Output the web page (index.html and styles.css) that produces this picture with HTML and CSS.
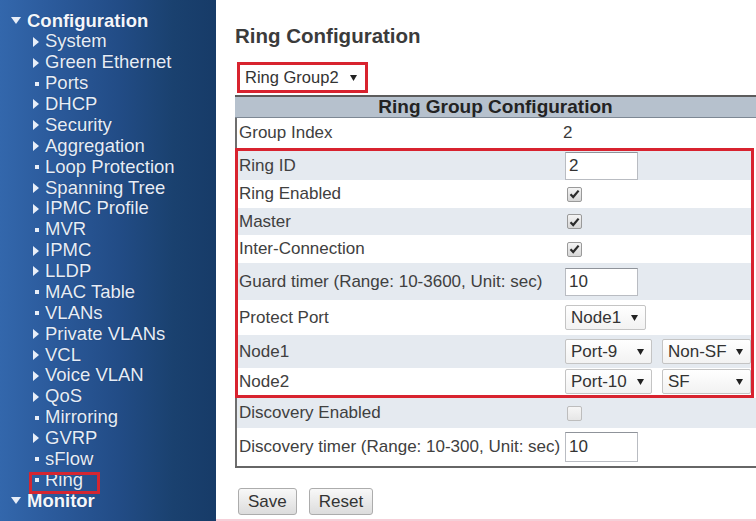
FILE: index.html
```html
<!DOCTYPE html>
<html lang="en">
<head>
<meta charset="utf-8">
<title>Ring Configuration</title>
<link rel="stylesheet" href="styles.css">
</head>
<body>
<div class="page">
  <nav class="sidebar">
    <div class="grp"><span class="caret"></span>Configuration</div>
    <ul class="menu">
      <li class="item"><span class="ico tri"></span>System</li>
      <li class="item"><span class="ico tri"></span>Green Ethernet</li>
      <li class="item"><span class="ico dot"></span>Ports</li>
      <li class="item"><span class="ico tri"></span>DHCP</li>
      <li class="item"><span class="ico tri"></span>Security</li>
      <li class="item"><span class="ico tri"></span>Aggregation</li>
      <li class="item"><span class="ico dot"></span>Loop Protection</li>
      <li class="item"><span class="ico tri"></span>Spanning Tree</li>
      <li class="item"><span class="ico tri"></span>IPMC Profile</li>
      <li class="item"><span class="ico dot"></span>MVR</li>
      <li class="item"><span class="ico tri"></span>IPMC</li>
      <li class="item"><span class="ico tri"></span>LLDP</li>
      <li class="item"><span class="ico dot"></span>MAC Table</li>
      <li class="item"><span class="ico dot"></span>VLANs</li>
      <li class="item"><span class="ico tri"></span>Private VLANs</li>
      <li class="item"><span class="ico tri"></span>VCL</li>
      <li class="item"><span class="ico tri"></span>Voice VLAN</li>
      <li class="item"><span class="ico tri"></span>QoS</li>
      <li class="item"><span class="ico dot"></span>Mirroring</li>
      <li class="item"><span class="ico tri"></span>GVRP</li>
      <li class="item"><span class="ico dot"></span>sFlow</li>
      <li class="item current"><span class="ico dot"></span>Ring</li>
    </ul>
    <div class="grp"><span class="caret"></span>Monitor</div>
  </nav>

  <main class="main">
    <h1 class="title">Ring Configuration</h1>
    <div class="group-select">
      <span>Ring Group2</span>
      <svg class="arr" width="7" height="6" viewBox="0 0 7 6"><path d="M0 0H7L3.5 6Z" fill="#222"/></svg>
    </div>

    <div class="cfg">
      <div class="cfg-head">Ring Group Configuration</div>
      <div class="row h30">
        <div class="lbl">Group Index</div>
        <div class="val val-text">2</div>
      </div>
      <div class="ring-box">
        <div class="row even h29">
          <div class="lbl">Ring ID</div>
          <div class="val"><input class="inp" type="text" value="2"></div>
        </div>
        <div class="row h28">
          <div class="lbl">Ring Enabled</div>
          <div class="val"><span class="chk"><svg width="11" height="10" viewBox="0 0 11 10"><path d="M1.5 5.2L4.2 8L9.6 1.6" fill="none" stroke="#2b2b2b" stroke-width="2.2"/></svg></span></div>
        </div>
        <div class="row even h27">
          <div class="lbl">Master</div>
          <div class="val"><span class="chk"><svg width="11" height="10" viewBox="0 0 11 10"><path d="M1.5 5.2L4.2 8L9.6 1.6" fill="none" stroke="#2b2b2b" stroke-width="2.2"/></svg></span></div>
        </div>
        <div class="row h28">
          <div class="lbl">Inter-Connection</div>
          <div class="val"><span class="chk"><svg width="11" height="10" viewBox="0 0 11 10"><path d="M1.5 5.2L4.2 8L9.6 1.6" fill="none" stroke="#2b2b2b" stroke-width="2.2"/></svg></span></div>
        </div>
        <div class="row even h37">
          <div class="lbl">Guard timer (Range: 10-3600, Unit: sec)</div>
          <div class="val"><input class="inp" type="text" value="10"></div>
        </div>
        <div class="row h35">
          <div class="lbl">Protect Port</div>
          <div class="val">
            <div class="sel w81"><span>Node1</span><svg class="arr" width="7" height="6" viewBox="0 0 7 6"><path d="M0 0H7L3.5 6Z" fill="#222"/></svg></div>
          </div>
        </div>
        <div class="row even h33">
          <div class="lbl">Node1</div>
          <div class="val">
            <div class="sel w87"><span>Port-9</span><svg class="arr" width="7" height="6" viewBox="0 0 7 6"><path d="M0 0H7L3.5 6Z" fill="#222"/></svg></div>
            <div class="sel w89"><span>Non-SF</span><svg class="arr" width="7" height="6" viewBox="0 0 7 6"><path d="M0 0H7L3.5 6Z" fill="#222"/></svg></div>
          </div>
        </div>
        <div class="row h27">
          <div class="lbl">Node2</div>
          <div class="val">
            <div class="sel w87"><span>Port-10</span><svg class="arr" width="7" height="6" viewBox="0 0 7 6"><path d="M0 0H7L3.5 6Z" fill="#222"/></svg></div>
            <div class="sel w89"><span>SF</span><svg class="arr" width="7" height="6" viewBox="0 0 7 6"><path d="M0 0H7L3.5 6Z" fill="#222"/></svg></div>
          </div>
        </div>
      </div>
      <div class="row even h30">
        <div class="lbl">Discovery Enabled</div>
        <div class="val"><span class="chk off"></span></div>
      </div>
      <div class="row h38">
        <div class="lbl">Discovery timer (Range: 10-300, Unit: sec)</div>
        <div class="val"><input class="inp tall" type="text" value="10"></div>
      </div>
    </div>

    <div class="actions">
      <button class="btn" type="button">Save</button>
      <button class="btn" type="button">Reset</button>
    </div>
  </main>
</div>
</body>
</html>
```

FILE: styles.css
```css
html, body {
  margin: 0;
  padding: 0;
  background: #fff;
}

body {
  font-family: "Liberation Sans", Arial, sans-serif;
}

.page {
  display: grid;
  grid-template-columns: 216px 1fr;
  height: 521px;
  overflow: hidden;
}

/* ---------- sidebar ---------- */
.sidebar {
  background: linear-gradient(to right, #3367ac 0%, #2b5a9b 25%, #224c86 55%, #1a416f 80%, #173b68 100%);
  color: #e6edf7;
  font-size: 18.5px;
  line-height: 20.87px;
  padding-top: 10.5px;
  overflow: hidden;
  text-shadow: 0 0 1px rgba(10, 30, 70, 0.6);
}

.grp {
  display: flex;
  align-items: center;
  padding-left: 10px;
  font-weight: bold;
  color: #f3f6fb;
}

.caret {
  width: 17px;
  height: 8px;
  flex: none;
  position: relative;
}

.caret::before {
  content: "";
  position: absolute;
  left: 1px;
  top: 0;
  border-left: 5.5px solid transparent;
  border-right: 5.5px solid transparent;
  border-top: 7px solid #e8eef8;
}

.menu {
  list-style: none;
  margin: 0;
  padding: 0;
}

.item {
  display: flex;
  align-items: center;
  padding-left: 32px;
  white-space: nowrap;
}

.item.current {
  position: relative;
}

.item.current::after {
  content: "";
  position: absolute;
  left: 29px;
  top: 2px;
  width: 71px;
  height: 22px;
  box-sizing: border-box;
  border: 3px solid #d42631;
}

.ico {
  width: 13px;
  height: 10px;
  flex: none;
  position: relative;
}

.tri::before {
  content: "";
  position: absolute;
  left: 1px;
  top: 0;
  border-top: 5px solid transparent;
  border-bottom: 5px solid transparent;
  border-left: 6px solid #e8eef8;
}

.dot::before {
  content: "";
  position: absolute;
  left: 3px;
  top: 3px;
  width: 4px;
  height: 4px;
  background: #e8eef8;
}

/* ---------- main ---------- */
.main {
  padding: 24px 0 0 19px;
  border-bottom: 2px solid #f6cfd8;
  box-sizing: border-box;
  color: #3a3a3a;
  overflow: hidden;
}

.title {
  margin: 0;
  font-size: 20.5px;
  line-height: 24px;
  font-weight: bold;
  color: #3b3b3b;
}

.group-select {
  margin: 14px 0 2px 2px;
  width: 131px;
  height: 31px;
  box-sizing: border-box;
  border: 3px solid #d8232f;
  display: flex;
  align-items: center;
  gap: 11px;
  padding-left: 5px;
  font-size: 16.5px;
  color: #333;
  background: #fff;
}

.cfg {
  border-top: 2px solid #5c5c5c;
  border-bottom: 2px solid #666;
  font-size: 17px;
}

.cfg-head {
  height: 20px;
  border-bottom: 1px solid #7d8894;
  background: #b6c1cd;
  text-align: center;
  font-weight: bold;
  font-size: 19px;
  line-height: 20px;
  color: #232323;
}

.row {
  display: grid;
  grid-template-columns: 326px 1fr;
  align-items: center;
  border-left: 2px solid #6e6e6e;
  background: #fff;
}

.row.even {
  background: #e5eaf0;
}

.h27 { height: 27px; }
.h28 { height: 28px; }
.h29 { height: 29px; }
.h30 { height: 30px; }
.h33 { height: 33px; }
.h35 { height: 35px; }
.h37 { height: 37px; }
.h38 { height: 38px; }

.lbl {
  padding-left: 2px;
  white-space: nowrap;
  color: #404040;
}

.val {
  display: flex;
  align-items: center;
  gap: 10px;
  padding-left: 2px;
}

.val-text {
  padding-left: 0;
}

.ring-box {
  border: 3px solid #d8232f;
  margin-right: 2px;
}

.ring-box .row {
  border-left: 0;
  grid-template-columns: 325px 1fr;
}

.ring-box .lbl {
  padding-left: 1px;
}

.inp {
  width: 73px;
  height: 28px;
  box-sizing: border-box;
  margin: 0;
  border: 1px solid #b9bcc2;
  border-top-color: #8f939a;
  background: #fff;
  padding: 0 0 0 3px;
  font-family: "Liberation Sans", Arial, sans-serif;
  font-size: 17px;
  color: #333;
  outline: none;
}

.inp.tall {
  height: 30px;
}

.chk {
  width: 15px;
  height: 15px;
  margin-left: 2px;
  box-sizing: border-box;
  border: 1px solid #9a9a9a;
  border-radius: 2px;
  background: linear-gradient(#f4f4f4, #d6d6d6);
  display: flex;
  align-items: center;
  justify-content: center;
}

.chk.off {
  border-color: #bdbdbd;
  background: linear-gradient(#f6f6f6, #e6e6e6);
}

.sel {
  height: 25px;
  box-sizing: border-box;
  border: 1px solid #c4c4c4;
  border-radius: 2px;
  background: linear-gradient(#ffffff, #f2f2f2);
  display: flex;
  align-items: center;
  justify-content: space-between;
  padding: 0 7px 0 5px;
  color: #333;
}

.w81 { width: 81px; }
.w87 { width: 87px; }
.w89 { width: 89px; }

.arr {
  flex: none;
  display: block;
}

.actions {
  display: flex;
  gap: 12px;
  margin: 20px 0 0 3px;
}

.btn {
  height: 27px;
  padding: 0 9px;
  border: 1px solid #acacac;
  border-radius: 3px;
  background: linear-gradient(#f8f8f8, #dcdcdc);
  font-family: "Liberation Sans", Arial, sans-serif;
  font-size: 17px;
  color: #333;
}
```
